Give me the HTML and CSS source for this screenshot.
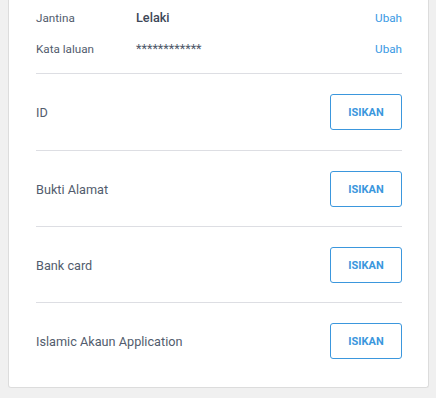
FILE: index.html
```html
<!DOCTYPE html>
<html lang="en">
<head>
<meta charset="UTF-8">
<meta name="viewport" content="width=device-width, initial-scale=1.0">
<title>Profil</title>
<link rel="stylesheet" href="styles.css">
</head>
<body>

<div class="card">
  <div class="info">
    <div class="info-row">
      <span class="label">Jantina</span>
      <span class="value">Lelaki</span>
      <a class="edit" href="#">Ubah</a>
    </div>
    <div class="info-row">
      <span class="label">Kata laluan</span>
      <span class="value stars">************</span>
      <a class="edit" href="#">Ubah</a>
    </div>
  </div>

  <div class="doc-row first">
    <span class="doc-name">ID</span>
    <button type="button">ISIKAN</button>
  </div>
  <div class="doc-row">
    <span class="doc-name">Bukti Alamat</span>
    <button type="button">ISIKAN</button>
  </div>
  <div class="doc-row">
    <span class="doc-name">Bank card</span>
    <button type="button">ISIKAN</button>
  </div>
  <div class="doc-row last">
    <span class="doc-name">Islamic Akaun Application</span>
    <button type="button">ISIKAN</button>
  </div>
</div>

</body>
</html>
```

FILE: styles.css
```css
body {
  margin: 0 7px 0 8px;
  background: #f0f0f0;
  font-family: Roboto, "Liberation Sans", Arial, sans-serif;
  font-size: 12.7px;
  color: #525c6d;
}
.card {
  background: #fff;
  border: 1px solid #dcdcdc;
  border-top: 0;
  border-radius: 0 0 3px 3px;
  padding: 2px 26px 8px 27px;
}
.info {
  padding-bottom: 9px;
  border-bottom: 1px solid #dddee3;
}
.info-row {
  display: flex;
  align-items: center;
  height: 31px;
  font-size: 11.7px;
}
.label {
  width: 100px;
}
.value {
  flex: 1;
  font-weight: 500;
  font-size: 12.7px;
  color: #3d4758;
}
.stars {
  font-weight: 400;
  color: #4e5869;
}
.edit {
  color: #3b9ae4;
  text-decoration: none;
  font-size: 11.7px;
}
.doc-row {
  display: flex;
  align-items: center;
  justify-content: space-between;
  padding: 20px 0 19px;
  border-bottom: 1px solid #dddee3;
}
.doc-row.first {
  padding-bottom: 20px;
}
.doc-row.last {
  padding-bottom: 20px;
  border-bottom: 0;
}
button {
  width: 72px;
  height: 36px;
  background: #fff;
  border: 1px solid #3b97dd;
  border-radius: 3px;
  color: #3b97dd;
  font-family: Roboto, "Liberation Sans", Arial, sans-serif;
  font-size: 11px;
  font-weight: 700;
  padding: 0;
}
```
